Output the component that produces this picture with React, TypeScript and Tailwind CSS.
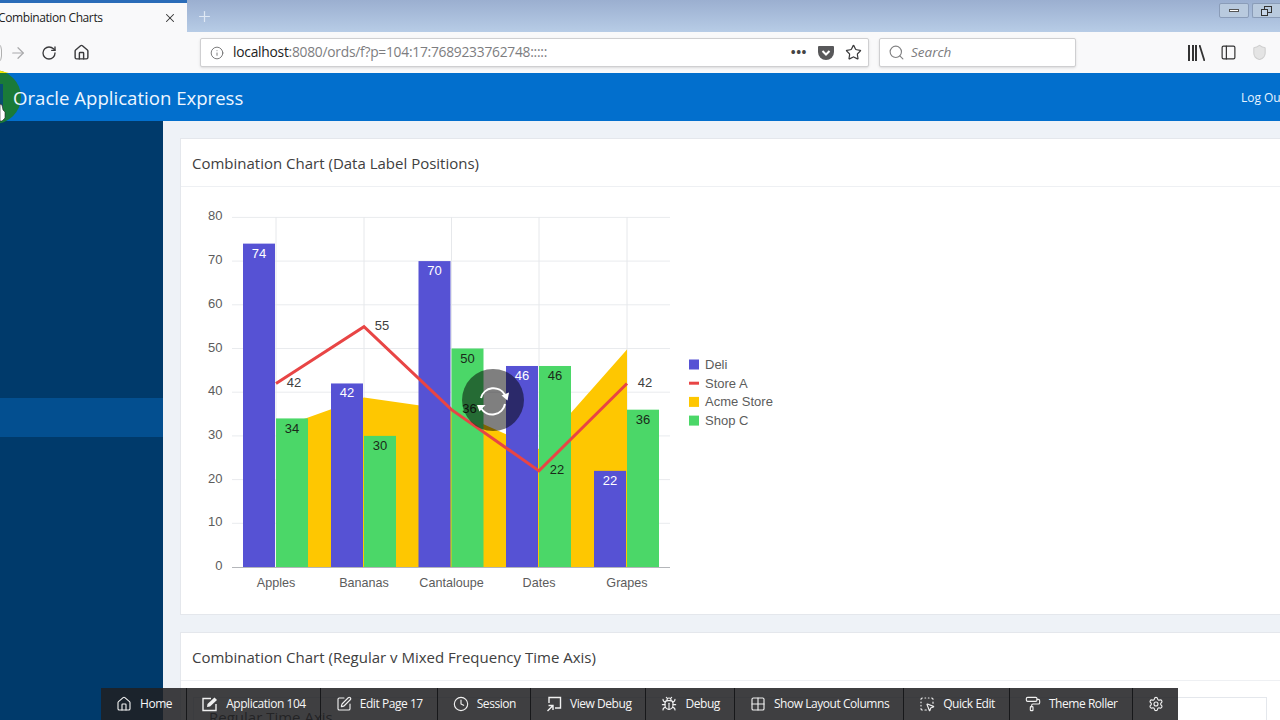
import React from "react";
import { House, Clock, Bug, Grid2x2, SquareDashedMousePointer, PaintRoller, Settings, SquarePen, ArrowRight, RotateCw, Star, Search, X, Plus, Info, PanelLeft, Shield } from "lucide-react";

const y = (v: number) => 567 - v * 4.37;
const cats = [
  { n: "Apples", x: 276, d: 74, c: 34 },
  { n: "Bananas", x: 364, d: 42, c: 30 },
  { n: "Cantaloupe", x: 451.5, d: 70, c: 50 },
  { n: "Dates", x: 539, d: 46, c: 46 },
  { n: "Grapes", x: 627, d: 22, c: 36 },
];
const line = [
  { x: 276, v: 42 },
  { x: 364, v: 55 },
  { x: 451.5, v: 36 },
  { x: 539, v: 22 },
  { x: 627, v: 42 },
];
const legend = [
  { t: "Deli", c: "#5652d4", k: "box" },
  { t: "Store A", c: "#e84545", k: "line" },
  { t: "Acme Store", c: "#fec701", k: "box" },
  { t: "Shop C", c: "#4bd768", k: "box" },
];

function Chart() {
  const font = "'Liberation Sans', Arial, sans-serif";
  return (
    <svg width="620" height="427" viewBox="181 187 620 427" className="block" style={{ fontFamily: font }}>
      {[10, 20, 30, 40, 50, 60, 70, 80].map((v) => (
        <line key={v} x1="232" x2="670" y1={y(v)} y2={y(v)} stroke="#e9ebee" strokeWidth="1" />
      ))}
      {cats.map((c) => (
        <line key={c.n} x1={c.x} x2={c.x} y1="217" y2="567" stroke="#e6e8eb" strokeWidth="1" />
      ))}
      {[0, 10, 20, 30, 40, 50, 60, 70, 80].map((v) => (
        <text key={v} x="222.5" y={y(v) + 3} textAnchor="end" fontSize="13" fill="#5c5c5c">{v}</text>
      ))}
      <polygon points="276,567 276,429 364,397.5 451.5,410 539,449 627,349.5 627,567" fill="#fec701" />
      {cats.map((c) => (
        <g key={c.n}>
          <rect x={c.x - 33} y={y(c.d)} width="32" height={567 - y(c.d)} fill="#5652d4" />
          <rect x={c.x} y={y(c.c)} width="32" height={567 - y(c.c)} fill="#4bd768" />
          <text x={c.x - 17} y={y(c.d) + 14} textAnchor="middle" fontSize="13" fill="#ffffff">{c.d}</text>
          <text x={c.x + 16} y={y(c.c) + 14.5} textAnchor="middle" fontSize="13" fill="#1a2a1a">{c.c}</text>
          <text x={c.x} y="587" textAnchor="middle" fontSize="12.6" fill="#5c5c5c">{c.n}</text>
        </g>
      ))}
      <line x1="232" x2="670" y1="567.5" y2="567.5" stroke="#b4b6ba" strokeWidth="1" />
      <polyline points={line.map((p) => `${p.x},${y(p.v)}`).join(" ")} fill="none" stroke="#e84545" strokeWidth="3" />
      {line.map((p) => (
        <text key={p.x} x={p.x + 18} y={y(p.v) + 3.5} textAnchor="middle" fontSize="13" fill={p.x === 451.5 || p.x === 539 ? "#1a2a1a" : "#404040"}>{p.v}</text>
      ))}
      {legend.map((l, i) => (
        <g key={l.t}>
          {l.k === "box" ? (
            <rect x="689" y={359.5 + i * 18.7} width="10" height="10" fill={l.c} />
          ) : (
            <rect x="689" y={363 + i * 18.7} width="10" height="3" fill={l.c} />
          )}
          <text x="705" y={369 + i * 18.7} fontSize="13" fill="#5c5c5c">{l.t}</text>
        </g>
      ))}
      <circle cx="493" cy="400" r="31" fill="#000000" fillOpacity="0.5" />
      <g fill="none" stroke="#ffffff" strokeWidth="2">
        <path d="M481 398 A13 13 0 0 1 505 395" />
        <path d="M505 404 A13 13 0 0 1 481 408" />
      </g>
      <polygon points="501.5,395.5 509,392.5 507.5,400.5" fill="#ffffff" />
      <polygon points="477,405 485.5,405 479.5,411.5" fill="#ffffff" />
    </svg>
  );
}

function Tool({ icon, label }: { icon: React.ReactNode; label?: string }) {
  return (
    <div className="flex h-full items-center gap-2 border-r border-[#17181a] pl-[15px] pr-[14px] last:border-r-0">
      {icon}
      {label ? <span className="whitespace-nowrap text-[12px] font-medium tracking-[-0.45px] text-[#f6f6f6]">{label}</span> : null}
    </div>
  );
}

const ic = { size: 16, strokeWidth: 1.7, className: "text-[#f0f0f0] shrink-0" };

function AppIcon() {
  return (
    <svg width="16" height="16" viewBox="0 0 16 16" className="shrink-0">
      <path d="M9 2.5H1v12h13V8" fill="none" stroke="#f0f0f0" strokeWidth="1.4" />
      <path d="M5.5 8 12.5 1.5 15 4 8 10.5l-3 .5z" fill="#f0f0f0" />
    </svg>
  );
}
function ViewDebugIcon() {
  return (
    <svg width="16" height="16" viewBox="0 0 16 16" className="shrink-0" fill="none" stroke="#f0f0f0" strokeWidth="1.4">
      <path d="M3 7V1.5h11.5V12H9" />
      <path d="M1.5 15 7 9.5M2.5 9.5H7V14" />
    </svg>
  );
}

export default function App() {
  return (
    <div className="relative flex h-[720px] w-[1280px] flex-col overflow-hidden bg-white font-['Open_Sans',sans-serif]">
      {/* tab strip */}
      <div className="flex h-[32px] shrink-0 bg-gradient-to-b from-[#9bafd0] to-[#b7cce6]">
        <div className="flex h-full w-[187px] items-center justify-between border-t-[3px] border-[#2a6cb8] bg-[#f9f9fa] pr-[10px]">
          <span className="-ml-[2px] whitespace-nowrap text-[12px] tracking-[-0.4px] text-[#222222]">Combination Charts</span>
          <X size={14} strokeWidth={1.8} className="text-[#333333]" />
        </div>
        <div className="flex h-full flex-1 items-center pl-[9px]">
          <Plus size={17} strokeWidth={1.7} className="text-[#dfe8f4]" />
          <div className="ml-auto flex h-full items-start gap-[3px] pt-[3px]">
            <div className="flex h-[15px] w-[30px] items-center justify-center rounded-[2px] border border-[#8a9cb8] bg-[#b9cade]">
              <div className="h-[3px] w-[10px] border border-[#555555] bg-white" />
            </div>
            <div className="flex h-[15px] w-[28px] items-center justify-center rounded-l-[2px] border border-r-0 border-[#8a9cb8] bg-[#b9cade]">
              <svg width="11" height="10" viewBox="0 0 11 10" fill="none" stroke="#333333"><rect x="3.5" y="0.5" width="7" height="6" /><rect x="0.5" y="3.5" width="6" height="6" fill="#c8d6e8" /></svg>
            </div>
          </div>
        </div>
      </div>
      {/* nav bar */}
      <div className="flex h-[41px] shrink-0 items-center bg-[#f9f9fa]">
        <div className="-ml-[16px] h-[24px] w-[18px] rounded-full border border-[#b0b0b0]" />
        <div className="ml-[11px] flex w-[10px] justify-center"><ArrowRight size={18} strokeWidth={1.6} className="shrink-0 text-[#a9a9ab]" /></div>
        <RotateCw size={16} strokeWidth={2} className="ml-[18px] text-[#3a3a3c]" />
        <House size={17} strokeWidth={2} className="ml-[16px] text-[#3a3a3c]" />
        <div className="ml-[110px] flex h-[29px] w-[669px] items-center rounded-[2px] border border-[#cfcfd1] bg-white pl-[9px] pr-[6px] shadow-sm">
          <Info size={14} strokeWidth={1.5} className="text-[#6a6a6c]" />
          <span className="ml-[9px] whitespace-nowrap text-[13.8px] tracking-[-0.25px] text-[#222222]">localhost<span className="text-[#7d7d80]">:8080/ords/f?p=104:17:7689233762748:::::</span></span>
          <span className="ml-auto text-[13px] font-bold tracking-[0.5px] text-[#444444]">•••</span>
          <svg width="18" height="16" viewBox="0 0 18 16" className="ml-[10px]"><path d="M2 1h14a1 1 0 0 1 1 1v5a8 8 0 0 1-16 0V2a1 1 0 0 1 1-1z" fill="#58585a" /><path d="M5.5 6 9 9.5 12.5 6" fill="none" stroke="#ffffff" strokeWidth="2" /></svg>
          <Star size={17} strokeWidth={1.7} className="ml-[10px] text-[#3a3a3c]" />
        </div>
        <div className="ml-[10px] flex h-[29px] w-[197px] items-center rounded-[2px] border border-[#cfcfd1] bg-white pl-[8px] shadow-sm">
          <Search size={17} strokeWidth={1.6} className="text-[#808082]" />
          <span className="ml-[6px] text-[13.5px] italic text-[#7c7c7e]">Search</span>
        </div>
        <div className="ml-[112px] flex h-[16px] w-[17px] items-end justify-between">
          <div className="h-[16px] w-[2px] bg-[#333333]" />
          <div className="h-[16px] w-[2px] bg-[#333333]" />
          <div className="h-[16px] w-[2px] bg-[#333333]" />
          <svg width="6" height="16" viewBox="0 0 6 16"><path d="M0.5 0 5.5 16" stroke="#333333" strokeWidth="1.8" /></svg>
        </div>
        <PanelLeft size={17} strokeWidth={1.7} className="ml-[15px] text-[#333333]" />
        <Shield size={17} strokeWidth={1.5} className="ml-[14px] fill-[#e4e4e4] text-[#cfcfcf]" />
      </div>
      {/* app header */}
      <div className="flex h-[48px] shrink-0 items-center justify-between bg-[#026fcd] pl-[13px] pt-[1px]">
        <span className="relative z-10 whitespace-nowrap text-[18.6px] text-[#eef6ff]">Oracle Application Express</span>
        <span className="-mr-[5px] whitespace-nowrap text-[12px] font-medium text-[#e6f3ff]">Log Out</span>
      </div>
      {/* body */}
      <div className="flex min-h-0 flex-1">
        <div className="flex w-[163px] shrink-0 flex-col bg-[#003a6b] pt-[277px]">
          <div className="h-[39px] bg-[#034f90]" />
        </div>
        <div className="min-h-0 flex-1 overflow-hidden bg-[#eef2f7] pl-[17px] pt-[17px]">
          <div className="mb-[17px] h-[477px] border border-r-0 border-[#e4e7ec] bg-white">
            <div className="flex h-[48px] items-center border-b border-[#eef0f3] pl-[11px] pt-[2px] text-[15px] text-[#404040]">Combination Chart (Data Label Positions)</div>
            <Chart />
          </div>
          <div className="h-[200px] border border-r-0 border-[#e4e7ec] bg-white">
            <div className="flex h-[48px] items-center border-b border-[#eef0f3] pl-[11px] pt-[2px] text-[15px] text-[#404040]">Combination Chart (Regular v Mixed Frequency Time Axis)</div>
            <div className="mx-[12px] mt-[16px] mr-[13px] h-[60px] border border-[#e4e7ec] pl-[15px] pt-[8px] text-[15px] text-[#404040]">Regular Time Axis</div>
          </div>
        </div>
      </div>
      {/* developer toolbar overlay */}
      <div className="absolute bottom-0 left-[101px] flex h-[32px] items-center bg-[#202022]/[0.86]">
        <Tool icon={<House {...ic} />} label="Home" />
        <Tool icon={<AppIcon />} label="Application 104" />
        <Tool icon={<SquarePen {...ic} />} label="Edit Page 17" />
        <Tool icon={<Clock {...ic} />} label="Session" />
        <Tool icon={<ViewDebugIcon />} label="View Debug" />
        <Tool icon={<Bug {...ic} />} label="Debug" />
        <Tool icon={<Grid2x2 {...ic} />} label="Show Layout Columns" />
        <Tool icon={<SquareDashedMousePointer {...ic} />} label="Quick Edit" />
        <Tool icon={<PaintRoller {...ic} />} label="Theme Roller" />
        <Tool icon={<Settings {...ic} />} />
      </div>
      {/* cursor highlight */}
      <svg width="30" height="70" viewBox="0 0 30 70" className="absolute left-0 top-[66px]">
        <circle cx="-6" cy="31" r="27" fill="#1a7a38" />
        <path d="M0 4.7 L9 7 L0 7 Z" fill="#f4e800" />
        <rect x="0" y="18" width="3" height="24" fill="#0a4f70" />
        <path d="M0 38 L2 39 L3 44 L5 46 L5 52 L2 55 L0 55 Z" fill="#ffffff" stroke="#222222" strokeWidth="0.6" />
      </svg>
    </div>
  );
}
